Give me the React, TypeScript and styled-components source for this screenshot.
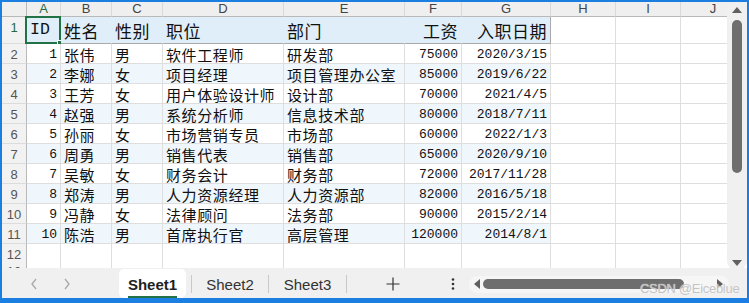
import React from 'react';
import styled, { createGlobalStyle } from 'styled-components';

const COLS = [25, 34, 51, 51, 121, 121, 57, 89, 65, 65, 65];
const TEMPLATE = COLS.map((c) => `${c}px`).join(' ');
const LETTERS = ['A', 'B', 'C', 'D', 'E', 'F', 'G', 'H', 'I', 'J'];
const HEADERS = ['ID', '姓名', '性别', '职位', '部门', '工资', '入职日期'];
const DATA: (string | number)[][] = [
  [1, '张伟', '男', '软件工程师', '研发部', 75000, '2020/3/15'],
  [2, '李娜', '女', '项目经理', '项目管理办公室', 85000, '2019/6/22'],
  [3, '王芳', '女', '用户体验设计师', '设计部', 70000, '2021/4/5'],
  [4, '赵强', '男', '系统分析师', '信息技术部', 80000, '2018/7/11'],
  [5, '孙丽', '女', '市场营销专员', '市场部', 60000, '2022/1/3'],
  [6, '周勇', '男', '销售代表', '销售部', 65000, '2020/9/10'],
  [7, '吴敏', '女', '财务会计', '财务部', 72000, '2017/11/28'],
  [8, '郑涛', '男', '人力资源经理', '人力资源部', 82000, '2016/5/18'],
  [9, '冯静', '女', '法律顾问', '法务部', 90000, '2015/2/14'],
  [10, '陈浩', '男', '首席执行官', '高层管理', 120000, '2014/8/1'],
];
const RIGHT_COLS = [0, 5, 6];

const Global = createGlobalStyle`
  html, body { margin: 0; padding: 0; background: #fff; }
  body { font-family: "Liberation Sans", Arial, sans-serif; }
  * { box-sizing: border-box; }
`;

const Frame = styled.div`
  position: relative;
  width: 749px;
  height: 303px;
  border: 2px solid #1b7fe2;
  border-bottom-width: 5px;
  display: flex;
  flex-direction: column;
  background: #fff;
  overflow: hidden;
`;

const Main = styled.div`
  display: flex;
  height: 266px;
  flex-shrink: 0;
`;

const Sheet = styled.div`
  flex: 1;
  overflow: hidden;
  display: flex;
  flex-direction: column;
`;

const GridRow = styled.div<{ $h: number }>`
  display: grid;
  grid-template-columns: ${TEMPLATE};
  height: ${(p) => p.$h}px;
  flex-shrink: 0;
`;

const Corner = styled.div`
  background: #efefef;
  border-right: 1px solid #b9b9b9;
  border-bottom: 1px solid #b9b9b9;
`;

const ColHead = styled.div<{ $active?: boolean }>`
  background: #efefef;
  border-right: 1px solid #d9d9d9;
  border-bottom: 1px solid #b9b9b9;
  color: ${(p) => (p.$active ? '#1f6b42' : '#444')};
  font-size: 13px;
  line-height: 14px;
  text-align: center;
`;

const RowHead = styled.div<{ $active?: boolean }>`
  background: #f2f2f2;
  border-right: 1px solid #b9b9b9;
  border-bottom: 1px solid #dcdcdc;
  color: ${(p) => (p.$active ? '#1f6b42' : '#555')};
  font-size: 13px;
  display: flex;
  align-items: flex-start;
  justify-content: center;
  padding-top: 3px;
`;

const Cell = styled.div<{
  $align?: 'left' | 'right';
  $bg?: string;
  $mono?: boolean;
  $big?: boolean;
  $rightLine?: string;
  $bottomLine?: string;
}>`
  position: relative;
  display: flex;
  align-items: center;
  justify-content: ${(p) => (p.$align === 'right' ? 'flex-end' : 'flex-start')};
  padding: ${(p) => (p.$align === 'right' ? '1px 3px 0 2px' : '1px 2px 0 3px')};
  background: ${(p) => p.$bg || '#fff'};
  border-right: 1px solid ${(p) => p.$rightLine || '#dedede'};
  border-bottom: 1px solid ${(p) => p.$bottomLine || '#dedede'};
  color: #111;
  white-space: nowrap;
  font-family: ${(p) =>
    p.$mono
      ? '"Liberation Mono", "DejaVu Sans Mono", monospace'
      : '"Noto Sans CJK SC", "Noto Sans", sans-serif'};
  font-size: ${(p) => (p.$mono ? (p.$big ? '16.5px' : '13px') : p.$big ? '17px' : '15px')};
  line-height: 1;
  letter-spacing: ${(p) => (p.$mono ? '0' : p.$big ? '0.5px' : '0.6px')};
`;

const Selection = styled.div`
  position: absolute;
  inset: -1px -1px -1px -2px;
  border: 2px solid #217346;
  pointer-events: none;
`;

const Handle = styled.div`
  position: absolute;
  right: -4px;
  bottom: -4px;
  width: 6px;
  height: 6px;
  background: #217346;
  border: 1px solid #fff;
`;

const VScroll = styled.div`
  width: 20px;
  height: 268px;
  flex-shrink: 0;
  background: #f0f0f0;
  border-radius: 0 0 9px 9px;
  display: flex;
  flex-direction: column;
  align-items: center;
  padding: 5px 0 4px;
`;

const TriUp = styled.div`
  width: 0;
  height: 0;
  border-left: 5px solid transparent;
  border-right: 5px solid transparent;
  border-bottom: 6px solid #606060;
`;

const TriDown = styled(TriUp)`
  border-bottom: none;
  border-top: 6px solid #606060;
  margin-top: auto;
`;

const TriLeft = styled.div`
  width: 0;
  height: 0;
  border-top: 5px solid transparent;
  border-bottom: 5px solid transparent;
  border-right: 6px solid #606060;
`;

const TriRight = styled(TriLeft)`
  border-right: none;
  border-left: 6px solid #606060;
`;

const VThumb = styled.div`
  width: 10px;
  height: 153px;
  margin-top: 7px;
  background: #6e6e6e;
  border-radius: 5px;
`;

const TabBar = styled.div`
  flex: 1;
  display: flex;
  align-items: stretch;
  background: #f0f0f0;
  padding-left: 15px;
`;

const NavButton = styled.div`
  width: 33px;
  display: flex;
  align-items: center;
  justify-content: center;
  color: #a9a9a9;
`;

const Tab = styled.div<{ $active?: boolean; $w: number }>`
  width: ${(p) => p.$w}px;
  margin: 1px 0 2px;
  display: flex;
  align-items: center;
  justify-content: center;
  background: ${(p) => (p.$active ? '#fff' : 'transparent')};
  border-radius: 5px;
  font-size: 15px;
  font-weight: ${(p) => (p.$active ? 700 : 400)};
  color: ${(p) => (p.$active ? '#1f1f1f' : '#333')};
`;

const TabLabel = styled.span<{ $active?: boolean }>`
  padding: 4px 0 3px;
  border-bottom: 2px solid ${(p) => (p.$active ? '#217346' : 'transparent')};
  margin-top: 3px;
`;

const Sep = styled.div`
  width: 1px;
  height: 18px;
  align-self: center;
  background: #c9c9c9;
`;

const IconBox = styled.div<{ $w: number }>`
  width: ${(p) => p.$w}px;
  display: flex;
  align-items: center;
  justify-content: center;
  color: #333;
`;

const HScroll = styled.div`
  width: 260px;
  height: 17px;
  align-self: center;
  margin-left: 2px;
  background: #f6f6f6;
  border-radius: 9px;
  display: flex;
  align-items: center;
  padding: 0 6px 0 5px;
`;

const HThumb = styled.div`
  width: 201px;
  height: 10px;
  margin-left: 3px;
  background: #6e6e6e;
  border-radius: 5px;
`;

const HSpacer = styled.div`
  flex: 1;
`;

const Watermark = styled.div`
  position: absolute;
  left: 638px;
  bottom: 2px;
  font-size: 13px;
  color: #c3c3c3;
  font-family: "Liberation Sans", Arial, sans-serif;
  letter-spacing: -0.3px;
  text-shadow: 0 0 1px #fff;
`;

const isNum = (v: string | number) => typeof v === 'number' || /^[\d/]+$/.test(String(v));

export default function App() {
  return (
    <>
      <Global />
      <Frame>
        <Main>
          <Sheet>
            <GridRow $h={15}>
              <Corner />
              {LETTERS.map((l, i) => (
                <ColHead key={l} $active={i === 0}>
                  {l}
                </ColHead>
              ))}
            </GridRow>

            <GridRow $h={27}>
              <RowHead $active>1</RowHead>
              {HEADERS.map((h, i) => (
                <Cell
                  key={h}
                  $big
                  $mono={i === 0}
                  $align={i === 5 || i === 6 ? 'right' : 'left'}
                  $bg="#dfeef9"
                  $rightLine={i === 6 ? '#a9a9a9' : '#dfeef9'}
                  $bottomLine="#a9a9a9"
                >
                  {h}
                  {i === 0 && (
                    <Selection>
                      <Handle />
                    </Selection>
                  )}
                </Cell>
              ))}
              <Cell />
              <Cell />
              <Cell />
            </GridRow>

            {DATA.map((row, r) => {
              const bg = r % 2 === 1 ? '#f0f7fc' : '#fff';
              return (
                <GridRow $h={20} key={r}>
                  <RowHead>{r + 2}</RowHead>
                  {row.map((v, c) => (
                    <Cell
                      key={c}
                      $bg={bg}
                      $mono={isNum(v)}
                      $align={RIGHT_COLS.includes(c) ? 'right' : 'left'}
                    >
                      {v}
                    </Cell>
                  ))}
                  <Cell />
                  <Cell />
                  <Cell />
                </GridRow>
              );
            })}

            {[12, 13].map((n) => (
              <GridRow $h={17} key={n}>
                <RowHead>{n}</RowHead>
                {LETTERS.map((l) => (
                  <Cell key={l} />
                ))}
              </GridRow>
            ))}
          </Sheet>
          <VScroll>
            <TriUp />
            <VThumb />
            <TriDown />
          </VScroll>
        </Main>

        <TabBar>
          <NavButton>
            <svg width="10" height="14" viewBox="0 0 10 14" fill="none" stroke="currentColor" strokeWidth="1.3">
              <path d="M7 2 L3 7 L7 12" />
            </svg>
          </NavButton>
          <NavButton>
            <svg width="10" height="14" viewBox="0 0 10 14" fill="none" stroke="currentColor" strokeWidth="1.3">
              <path d="M3 2 L7 7 L3 12" />
            </svg>
          </NavButton>
          <IconBox $w={36} />
          <Tab $active $w={67}>
            <TabLabel $active>Sheet1</TabLabel>
          </Tab>
          <IconBox $w={5} />
          <Sep />
          <Tab $w={76}>
            <TabLabel>Sheet2</TabLabel>
          </Tab>
          <Sep />
          <Tab $w={77}>
            <TabLabel>Sheet3</TabLabel>
          </Tab>
          <Sep />
          <IconBox $w={92}>
            <svg width="14" height="14" viewBox="0 0 14 14" stroke="#333" strokeWidth="1.2">
              <path d="M7 0.5 V13.5 M0.5 7 H13.5" />
            </svg>
          </IconBox>
          <IconBox $w={28}>
            <svg width="4" height="14" viewBox="0 0 4 14" fill="#333">
              <circle cx="2" cy="2.5" r="1.3" />
              <circle cx="2" cy="7" r="1.3" />
              <circle cx="2" cy="11.5" r="1.3" />
            </svg>
          </IconBox>
          <HScroll>
            <TriLeft />
            <HThumb />
            <HSpacer />
            <TriRight />
          </HScroll>
        </TabBar>
        <Watermark>CSDN @Eiceblue</Watermark>
      </Frame>
    </>
  );
}
